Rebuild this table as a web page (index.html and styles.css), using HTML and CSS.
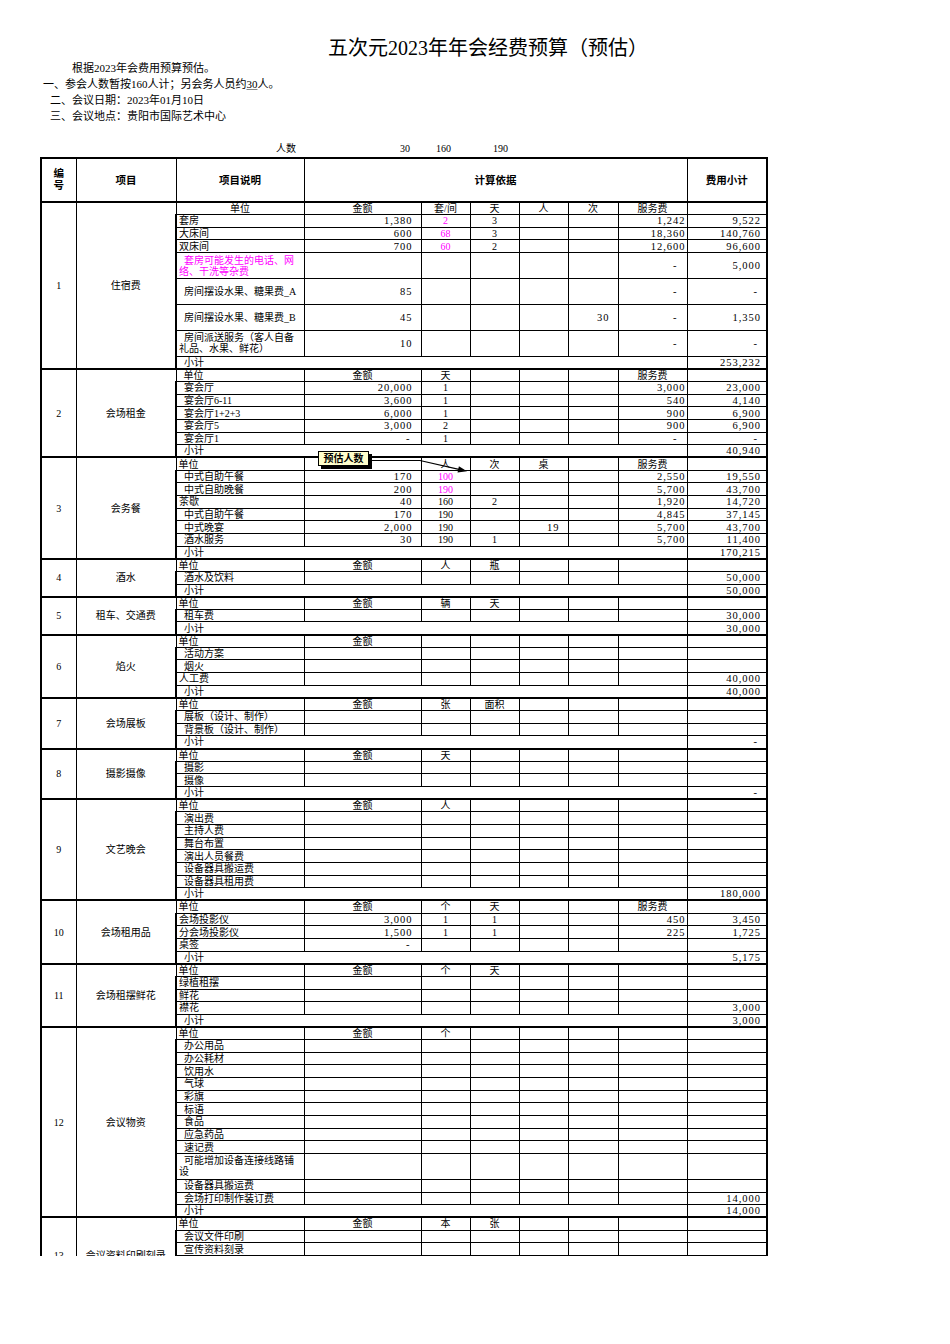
FILE: index.html
```html
<!DOCTYPE html>
<html lang="zh-CN">
<head>
<meta charset="utf-8">
<title>五次元2023年年会经费预算（预估）</title>
<link rel="stylesheet" href="styles.css">
</head>
<body>
<div class="page">
  <div class="title">五次元2023年年会经费预算（预估）</div>
  <div class="intro">
    <p class="l1">根据2023年会费用预算预估。</p>
    <p class="l2">一、参会人数暂按160人计；另会务人员约<u>30</u>人。</p>
    <p class="l3">二、会议日期：2023年01月10日</p>
    <p class="l3">三、会议地点：贵阳市国际艺术中心</p>
  </div>
  <div class="count">
    <span class="k1">人数</span><span class="k2">30</span><span class="k3">160</span><span class="k4">190</span>
  </div>
  <table class="sheet">
    <colgroup>
      <col class="w-no"><col class="w-item"><col class="w-desc"><col class="w-amt"><col class="w-s"><col class="w-s"><col class="w-s"><col class="w-s2"><col class="w-fee"><col class="w-tot">
    </colgroup>
    <thead>
      <tr><th class="no">编<br>号</th><th>项目</th><th>项目说明</th><th colspan="6">计算依据</th><th>费用小计</th></tr>
    </thead>
    <tbody>
      <tr class="sec"><td rowspan="9" class="c">1</td><td rowspan="9" class="c">住宿费</td><td class="c">单位</td><td class="c">金额</td><td class="c">套/间</td><td class="c">天</td><td class="c">人</td><td class="c">次</td><td class="c">服务费</td><td></td></tr>
      <tr><td>套房</td><td class="a">1,380</td><td class="c m">2</td><td class="c">3</td><td></td><td></td><td class="f">1,242</td><td class="t">9,522</td></tr>
      <tr><td>大床间</td><td class="a">600</td><td class="c m">68</td><td class="c">3</td><td></td><td></td><td class="f">18,360</td><td class="t">140,760</td></tr>
      <tr><td>双床间</td><td class="a">700</td><td class="c m">60</td><td class="c">2</td><td></td><td></td><td class="f">12,600</td><td class="t">96,600</td></tr>
      <tr class="d"><td class="m ti">套房可能发生的电话、网<br>络、干洗等杂费</td><td></td><td></td><td></td><td></td><td></td><td class="f d">-</td><td class="t">5,000</td></tr>
      <tr class="d"><td class="i">房间摆设水果、糖果费_A</td><td class="a">85</td><td></td><td></td><td></td><td></td><td class="f d">-</td><td class="t d">-</td></tr>
      <tr class="d"><td class="i">房间摆设水果、糖果费_B</td><td class="a">45</td><td></td><td></td><td></td><td class="q">30</td><td class="f d">-</td><td class="t">1,350</td></tr>
      <tr class="d"><td class="ti">房间派送服务（客人自备<br>礼品、水果、鲜花）</td><td class="a">10</td><td></td><td></td><td></td><td></td><td class="f d">-</td><td class="t d">-</td></tr>
      <tr><td colspan="7" class="i">小计</td><td class="t">253,232</td></tr>

      <tr class="sec"><td rowspan="7" class="c">2</td><td rowspan="7" class="c">会场租金</td><td class="i">单位</td><td class="c">金额</td><td class="c">天</td><td></td><td></td><td></td><td class="c">服务费</td><td></td></tr>
      <tr><td class="i">宴会厅</td><td class="a">20,000</td><td class="c">1</td><td></td><td></td><td></td><td class="f">3,000</td><td class="t">23,000</td></tr>
      <tr><td class="i">宴会厅6-11</td><td class="a">3,600</td><td class="c">1</td><td></td><td></td><td></td><td class="f">540</td><td class="t">4,140</td></tr>
      <tr><td class="i">宴会厅1+2+3</td><td class="a">6,000</td><td class="c">1</td><td></td><td></td><td></td><td class="f">900</td><td class="t">6,900</td></tr>
      <tr><td class="i">宴会厅5</td><td class="a">3,000</td><td class="c">2</td><td></td><td></td><td></td><td class="f">900</td><td class="t">6,900</td></tr>
      <tr><td class="i">宴会厅1</td><td class="a d">-</td><td class="c">1</td><td></td><td></td><td></td><td class="f d">-</td><td class="t d">-</td></tr>
      <tr><td colspan="7" class="i">小计</td><td class="t">40,940</td></tr>

      <tr class="sec"><td rowspan="8" class="c">3</td><td rowspan="8" class="c">会务餐</td><td>单位</td><td></td><td class="c">人</td><td class="c">次</td><td class="c">桌</td><td></td><td class="c">服务费</td><td></td></tr>
      <tr><td class="i">中式自助午餐</td><td class="a">170</td><td class="c m">100</td><td></td><td></td><td></td><td class="f">2,550</td><td class="t">19,550</td></tr>
      <tr><td class="i">中式自助晚餐</td><td class="a">200</td><td class="c m">190</td><td></td><td></td><td></td><td class="f">5,700</td><td class="t">43,700</td></tr>
      <tr><td>茶歇</td><td class="a">40</td><td class="c">160</td><td class="c">2</td><td></td><td></td><td class="f">1,920</td><td class="t">14,720</td></tr>
      <tr><td class="i">中式自助午餐</td><td class="a">170</td><td class="c">190</td><td></td><td></td><td></td><td class="f">4,845</td><td class="t">37,145</td></tr>
      <tr><td class="i">中式晚宴</td><td class="a">2,000</td><td class="c">190</td><td></td><td class="q">19</td><td></td><td class="f">5,700</td><td class="t">43,700</td></tr>
      <tr><td class="i">酒水服务</td><td class="a">30</td><td class="c">190</td><td class="c">1</td><td></td><td></td><td class="f">5,700</td><td class="t">11,400</td></tr>
      <tr><td colspan="7" class="i">小计</td><td class="t">170,215</td></tr>

      <tr class="sec"><td rowspan="3" class="c">4</td><td rowspan="3" class="c">酒水</td><td>单位</td><td class="c">金额</td><td class="c">人</td><td class="c">瓶</td><td></td><td></td><td></td><td></td></tr>
      <tr><td class="i">酒水及饮料</td><td></td><td></td><td></td><td></td><td></td><td></td><td class="t">50,000</td></tr>
      <tr><td colspan="7" class="i">小计</td><td class="t">50,000</td></tr>

      <tr class="sec"><td rowspan="3" class="c">5</td><td rowspan="3" class="c">租车、交通费</td><td>单位</td><td class="c">金额</td><td class="c">辆</td><td class="c">天</td><td></td><td></td><td></td><td></td></tr>
      <tr><td class="i">租车费</td><td></td><td></td><td></td><td></td><td></td><td></td><td class="t">30,000</td></tr>
      <tr><td colspan="7" class="i">小计</td><td class="t">30,000</td></tr>

      <tr class="sec"><td rowspan="5" class="c">6</td><td rowspan="5" class="c">焰火</td><td>单位</td><td class="c">金额</td><td></td><td></td><td></td><td></td><td></td><td></td></tr>
      <tr><td class="i">活动方案</td><td></td><td></td><td></td><td></td><td></td><td></td><td></td></tr>
      <tr><td class="i">烟火</td><td></td><td></td><td></td><td></td><td></td><td></td><td></td></tr>
      <tr><td>人工费</td><td></td><td></td><td></td><td></td><td></td><td></td><td class="t">40,000</td></tr>
      <tr><td colspan="7" class="i">小计</td><td class="t">40,000</td></tr>

      <tr class="sec"><td rowspan="4" class="c">7</td><td rowspan="4" class="c">会场展板</td><td>单位</td><td class="c">金额</td><td class="c">张</td><td class="c">面积</td><td></td><td></td><td></td><td></td></tr>
      <tr><td class="i">展板（设计、制作）</td><td></td><td></td><td></td><td></td><td></td><td></td><td></td></tr>
      <tr><td class="i">背景板（设计、制作）</td><td></td><td></td><td></td><td></td><td></td><td></td><td></td></tr>
      <tr><td colspan="7" class="i">小计</td><td class="t d">-</td></tr>

      <tr class="sec"><td rowspan="4" class="c">8</td><td rowspan="4" class="c">摄影摄像</td><td>单位</td><td class="c">金额</td><td class="c">天</td><td></td><td></td><td></td><td></td><td></td></tr>
      <tr><td class="i">摄影</td><td></td><td></td><td></td><td></td><td></td><td></td><td></td></tr>
      <tr><td class="i">摄像</td><td></td><td></td><td></td><td></td><td></td><td></td><td></td></tr>
      <tr><td colspan="7" class="i">小计</td><td class="t d">-</td></tr>

      <tr class="sec"><td rowspan="8" class="c">9</td><td rowspan="8" class="c">文艺晚会</td><td>单位</td><td class="c">金额</td><td class="c">人</td><td></td><td></td><td></td><td></td><td></td></tr>
      <tr><td class="i">演出费</td><td></td><td></td><td></td><td></td><td></td><td></td><td></td></tr>
      <tr><td class="i">主持人费</td><td></td><td></td><td></td><td></td><td></td><td></td><td></td></tr>
      <tr><td class="i">舞台布置</td><td></td><td></td><td></td><td></td><td></td><td></td><td></td></tr>
      <tr><td class="i">演出人员餐费</td><td></td><td></td><td></td><td></td><td></td><td></td><td></td></tr>
      <tr><td class="i">设备器具搬运费</td><td></td><td></td><td></td><td></td><td></td><td></td><td></td></tr>
      <tr><td class="i">设备器具租用费</td><td></td><td></td><td></td><td></td><td></td><td></td><td></td></tr>
      <tr><td colspan="7" class="i">小计</td><td class="t">180,000</td></tr>

      <tr class="sec"><td rowspan="5" class="c">10</td><td rowspan="5" class="c">会场租用品</td><td>单位</td><td class="c">金额</td><td class="c">个</td><td class="c">天</td><td></td><td></td><td class="c">服务费</td><td></td></tr>
      <tr><td>会场投影仪</td><td class="a">3,000</td><td class="c">1</td><td class="c">1</td><td></td><td></td><td class="f">450</td><td class="t">3,450</td></tr>
      <tr><td>分会场投影仪</td><td class="a">1,500</td><td class="c">1</td><td class="c">1</td><td></td><td></td><td class="f">225</td><td class="t">1,725</td></tr>
      <tr><td>桌签</td><td class="a d">-</td><td></td><td></td><td></td><td></td><td></td><td></td></tr>
      <tr><td colspan="7" class="i">小计</td><td class="t">5,175</td></tr>

      <tr class="sec"><td rowspan="5" class="c">11</td><td rowspan="5" class="c">会场租摆鲜花</td><td>单位</td><td class="c">金额</td><td class="c">个</td><td class="c">天</td><td></td><td></td><td></td><td></td></tr>
      <tr><td>绿植租摆</td><td></td><td></td><td></td><td></td><td></td><td></td><td></td></tr>
      <tr><td>鲜花</td><td></td><td></td><td></td><td></td><td></td><td></td><td></td></tr>
      <tr><td>襟花</td><td></td><td></td><td></td><td></td><td></td><td></td><td class="t">3,000</td></tr>
      <tr><td colspan="7" class="i">小计</td><td class="t">3,000</td></tr>

      <tr class="sec"><td rowspan="14" class="c">12</td><td rowspan="14" class="c">会议物资</td><td>单位</td><td class="c">金额</td><td class="c">个</td><td></td><td></td><td></td><td></td><td></td></tr>
      <tr><td class="i">办公用品</td><td></td><td></td><td></td><td></td><td></td><td></td><td></td></tr>
      <tr><td class="i">办公耗材</td><td></td><td></td><td></td><td></td><td></td><td></td><td></td></tr>
      <tr><td class="i">饮用水</td><td></td><td></td><td></td><td></td><td></td><td></td><td></td></tr>
      <tr><td class="i">气球</td><td></td><td></td><td></td><td></td><td></td><td></td><td></td></tr>
      <tr><td class="i">彩旗</td><td></td><td></td><td></td><td></td><td></td><td></td><td></td></tr>
      <tr><td class="i">标语</td><td></td><td></td><td></td><td></td><td></td><td></td><td></td></tr>
      <tr><td class="i">食品</td><td></td><td></td><td></td><td></td><td></td><td></td><td></td></tr>
      <tr><td class="i">应急药品</td><td></td><td></td><td></td><td></td><td></td><td></td><td></td></tr>
      <tr><td class="i">速记费</td><td></td><td></td><td></td><td></td><td></td><td></td><td></td></tr>
      <tr class="d"><td class="ti">可能增加设备连接线路铺<br>设</td><td></td><td></td><td></td><td></td><td></td><td></td><td></td></tr>
      <tr><td class="i">设备器具搬运费</td><td></td><td></td><td></td><td></td><td></td><td></td><td></td></tr>
      <tr><td class="i">会场打印制作装订费</td><td></td><td></td><td></td><td></td><td></td><td></td><td class="t">14,000</td></tr>
      <tr><td colspan="7" class="i">小计</td><td class="t">14,000</td></tr>

      <tr class="sec"><td rowspan="6" class="c">13</td><td rowspan="6" class="c">会议资料印刷刻录</td><td>单位</td><td class="c">金额</td><td class="c">本</td><td class="c">张</td><td></td><td></td><td></td><td></td></tr>
      <tr><td class="i">会议文件印刷</td><td></td><td></td><td></td><td></td><td></td><td></td><td></td></tr>
      <tr><td class="i">宣传资料刻录</td><td></td><td></td><td></td><td></td><td></td><td></td><td></td></tr>
      <tr><td class="i">光盘刻录</td><td></td><td></td><td></td><td></td><td></td><td></td><td></td></tr>
      <tr><td class="i">其他</td><td></td><td></td><td></td><td></td><td></td><td></td><td></td></tr>
      <tr><td colspan="7" class="i">小计</td><td class="t"></td></tr>
    </tbody>
  </table>

  <div class="note">预估人数</div>
  <svg class="arrow" width="104" height="22" viewBox="0 0 104 22" aria-hidden="true">
    <polyline points="2,5.5 52,5.5 92,14.6" fill="none" stroke="#000" stroke-width="1.2"/>
    <polygon points="99,16.2 89.5,17.4 90.9,11.3" fill="#000"/>
  </svg>
</div>
</body>
</html>
```

FILE: styles.css
```css
html, body {
  margin: 0;
  padding: 0;
  background: #fff;
}

.page {
  position: relative;
  width: 950px;
  height: 1256px;
  overflow: hidden;
  font-family: "Liberation Serif", "Noto Sans CJK SC", serif;
  color: #000;
}

.title {
  margin-top: 36px;
  height: 24px;
  line-height: 24px;
  padding-left: 328px;
  font-size: 20px;
  white-space: nowrap;
}

.intro p {
  margin: 0;
  height: 16px;
  line-height: 16px;
  font-size: 11px;
  white-space: nowrap;
}

.intro .l1 { padding-left: 72px; }
.intro .l2 { padding-left: 43px; }
.intro .l3 { padding-left: 50px; }

.intro u {
  text-decoration-color: #888;
}

.count {
  display: flex;
  margin-top: 19px;
  height: 12px;
  line-height: 12px;
  font-size: 10px;
}

.count span {
  display: block;
  text-align: right;
  flex: none;
}

.count .k1 { width: 296px; }
.count .k2 { width: 114px; }
.count .k3 { width: 41px; }
.count .k4 { width: 57px; }

.sheet {
  margin: 2px 0 0 40px;
  width: 726px;
  table-layout: fixed;
  border-collapse: collapse;
  font-size: 10px;
}

.w-no { width: 35px; }
.w-item { width: 100px; }
.w-desc { width: 128px; }
.w-amt { width: 117px; }
.w-s { width: 49px; }
.w-s2 { width: 50px; }
.w-fee { width: 69px; }
.w-tot { width: 80px; }

.sheet th,
.sheet td {
  border: 1px solid #000;
  padding: 0 0 0 2px;
  line-height: 11px;
  white-space: nowrap;
  overflow: hidden;
  vertical-align: middle;
  text-align: left;
}

.sheet thead tr {
  height: 44px;
}

.sheet th {
  border-top: 2px solid #000;
  border-bottom: 2px solid #000;
  text-align: center;
  font-weight: bold;
  font-size: 10.5px;
  padding: 0;
}

.sheet th.no {
  line-height: 12px;
}

.sheet tbody tr {
  height: 12.67px;
}

.sheet tbody tr.d {
  height: 25.9px;
}

.sheet tr.sec > td {
  border-top: 2px solid #000;
}

.sheet tr > :first-child {
  border-left: 2px solid #000;
}

.sheet tr > :last-child {
  border-right: 2px solid #000;
}

.sheet td.c {
  text-align: center;
  padding: 0;
  letter-spacing: 0;
}

.sheet td.i {
  padding-left: 7px;
}

.sheet td.ti {
  text-indent: 5px;
}

.sheet td.m {
  color: #ff00ff;
}

.sheet td.a,
.sheet td.f,
.sheet td.t,
.sheet td.q {
  text-align: right;
  letter-spacing: 1px;
  font-size: 10.5px;
  padding-left: 0;
}

.sheet td.a { padding-right: 8px; }
.sheet td.f { padding-right: 1px; }
.sheet td.t { padding-right: 5px; }
.sheet td.q { padding-right: 8px; }

.sheet td.a.d { padding-right: 10px; }
.sheet td.f.d { padding-right: 9px; }
.sheet td.t.d { padding-right: 8px; }

.note {
  position: absolute;
  left: 318px;
  top: 451px;
  width: 49px;
  height: 13px;
  line-height: 13px;
  background: #ffffcc;
  border: 1px solid #000;
  box-shadow: 3px 3px 0 #000;
  font-size: 10px;
  font-weight: bold;
  text-align: center;
  white-space: nowrap;
}

.arrow {
  position: absolute;
  left: 368px;
  top: 455px;
}
```
